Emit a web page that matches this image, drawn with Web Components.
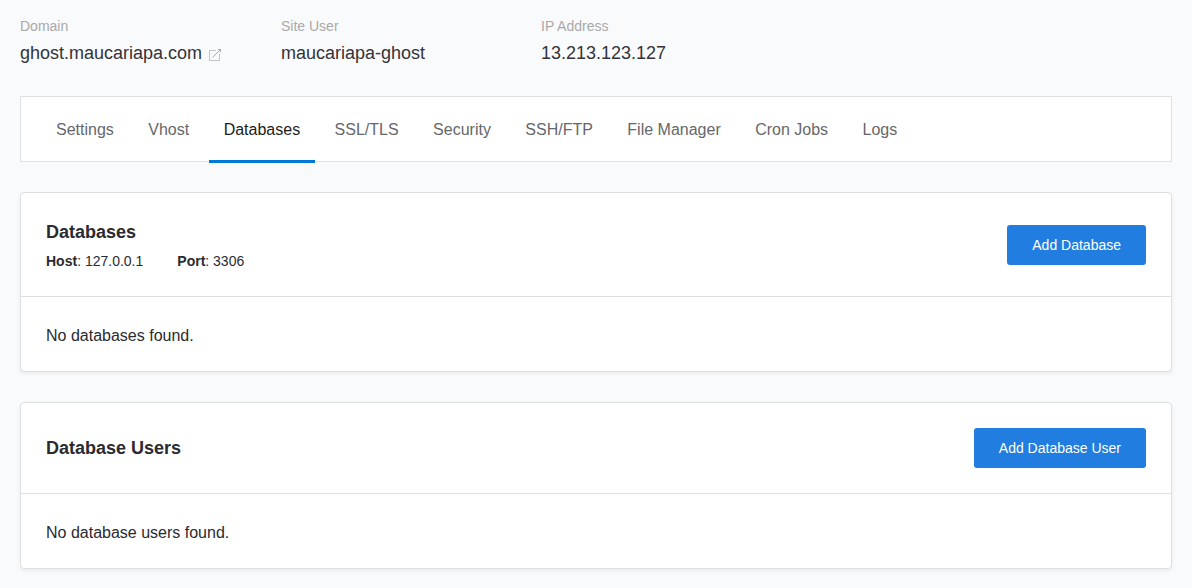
<!DOCTYPE html>
<html lang="en">
<head>
<meta charset="utf-8">
<title>Databases</title>
<style>
body { margin: 0; background: #f9fafc; color: #2b2a30; font: 16px/24px "Liberation Sans", Arial, sans-serif; }
</style>
</head>
<body>
<site-page></site-page>
<script>
const define = (name, html) => customElements.define(name, class extends HTMLElement {
  constructor() {
    super();
    const t = document.createElement('template');
    t.innerHTML = html;
    this.attachShadow({ mode: 'open' }).append(t.content.cloneNode(true));
  }
});

define('site-fact', `
<style>
:host { display: block; }
.label { font-size: 14px; line-height: 20px; color: #a9a9a9; }
.value { display: flex; align-items: center; gap: 7px; font-size: 18px; line-height: 34px; color: #333338; }
</style>
<div class="label"><slot name="label"></slot></div>
<div class="value"><slot></slot></div>`);

define('external-link', `
<style>
:host { display: flex; }
a { display: block; color: #a9a9a9; padding-top: 4px; }
svg { display: block; }
</style>
<a href="#" aria-label="Open site"><svg width="13" height="12" viewBox="0 0 13 12" fill="none" stroke="currentColor"><path d="M7 1.500H.5v10h10V5" stroke="#c3c3c8"/><path d="M3.500 8.500L10.500 1.500"/><path d="M8.500 0h3.500v3.500z" fill="currentColor" stroke="none"/></svg></a>`);

define('nav-tabs', `
<style>
:host { display: block; background: #fff; border: 1px solid #e0e1e3; }
nav { padding: 0 20px; }
::slotted(a) { display: inline-block; padding: 21px 15px 18px; line-height: 24px; border-bottom: 3px solid transparent; margin-bottom: -2px; color: #66676a; text-decoration: none; }
::slotted(a[aria-current]) { color: #1c1d21; border-color: #0078d7; }
</style>
<nav aria-label="Site sections"><slot></slot></nav>`);

define('action-button', `
<style>
:host { display: block; }
button { display: block; height: 40px; padding: 0 25px; border: 0; border-radius: 3px; background: #217ddf; color: #fff; font: inherit; font-size: 14px; }
</style>
<button type="button"><slot></slot></button>`);

define('data-card', `
<style>
:host { display: block; background: #fff; border: 1px solid #dedfe1; border-radius: 4px; box-shadow: 0 2px 4px rgba(0,0,0,.06); }
header { display: flex; align-items: center; justify-content: space-between; padding: 25px; border-bottom: 1px solid #dedfe1; }
h2 { margin: 0; font-size: 18px; line-height: 28px; }
.body { padding: 27px 25px 23px; line-height: 24px; }
::slotted(.meta) { display: flex; gap: 34px; padding-top: 5px; font-size: 14px; line-height: 20px; }
</style>
<header><div><h2><slot name="title"></slot></h2><slot name="meta"></slot></div><slot name="action"></slot></header>
<div class="body"><slot></slot></div>`);

define('site-page', `
<style>
:host { display: block; padding: 16px 20px 19px; }
.facts { display: grid; grid-template-columns: 261px 260px 1fr; }
nav-tabs { margin-top: 26px; }
data-card { margin-top: 30px; }
</style>
<div class="facts">
<site-fact><span slot="label">Domain</span><span>ghost.maucariapa.com</span><external-link></external-link></site-fact>
<site-fact><span slot="label">Site User</span>maucariapa-ghost</site-fact>
<site-fact><span slot="label">IP Address</span>13.213.123.127</site-fact>
</div>
<nav-tabs>
<a href="#">Settings</a>
<a href="#">Vhost</a>
<a href="#" aria-current="page">Databases</a>
<a href="#">SSL/TLS</a>
<a href="#">Security</a>
<a href="#">SSH/FTP</a>
<a href="#">File Manager</a>
<a href="#">Cron Jobs</a>
<a href="#">Logs</a>
</nav-tabs>
<data-card><span slot="title">Databases</span><div slot="meta" class="meta"><span><b>Host</b>: 127.0.0.1</span><span><b>Port</b>: 3306</span></div><action-button slot="action">Add Database</action-button>No databases found.</data-card>
<data-card><span slot="title">Database Users</span><action-button slot="action">Add Database User</action-button>No database users found.</data-card>`);
</script>
</body>
</html>
